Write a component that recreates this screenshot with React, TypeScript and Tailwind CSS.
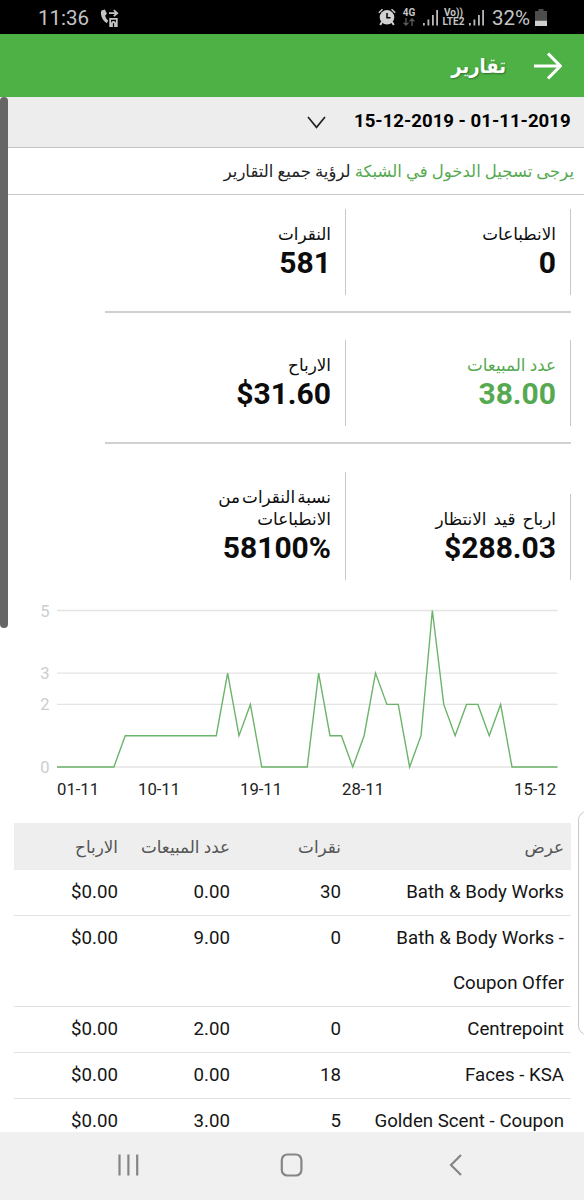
import type { ReactNode } from 'react';

const stats = [
  {
    className: 'mb-[27px] border-b-2 border-[#d0d0d0] pb-[16px]',
    items: [
      { label: 'الانطباعات', value: '0' },
      { label: 'النقرات', value: '581' },
    ],
  },
  {
    className: 'mb-[28px] border-b-2 border-[#d0d0d0] pb-[16px]',
    items: [
      { label: 'عدد المبيعات', value: '38.00', green: true },
      { label: 'الارباح', value: '$31.60' },
    ],
  },
  {
    className: '',
    items: [
      { label: 'ارباح قيد الانتظار', value: '$288.03', spacing: '[word-spacing:3px]' },
      { label: 'نسبة النقرات من الانطباعات', value: '58100%', spacing: '[word-spacing:-2px]' },
    ],
  },
];

const sales = [
  0, 0, 0, 0, 0, 0, 1, 1, 1, 1, 1, 1, 1, 1, 1, 3, 1, 2, 0, 0, 0, 0, 0,
  3, 1, 1, 0, 1, 3, 2, 2, 0, 1, 5, 2, 1, 2, 2, 1, 2, 0, 0, 0, 0, 0,
];

const ticks = [5, 3, 2, 0];

const dates = [
  { x: 57, label: '01-11' },
  { x: 138, label: '10-11' },
  { x: 240, label: '19-11' },
  { x: 342, label: '28-11' },
  { x: 514, label: '15-12' },
];

const offers = [
  { name: 'Bath & Body Works', clicks: '30', sales: '0.00', earnings: '$0.00' },
  { name: 'Bath & Body Works - Coupon Offer', clicks: '0', sales: '9.00', earnings: '$0.00' },
  { name: 'Centrepoint', clicks: '0', sales: '2.00', earnings: '$0.00' },
  { name: 'Faces - KSA', clicks: '18', sales: '0.00', earnings: '$0.00' },
  { name: 'Golden Scent - Coupon', clicks: '5', sales: '3.00', earnings: '$0.00' },
];

const Signal = () => (
  <svg width="16" height="18" viewBox="0 0 16 18" fill="#b8b8b8">
    <rect x="0" y="15" width="1.8" height="2.5" />
    <rect x="4.5" y="11.5" width="1.8" height="6" />
    <rect x="9" y="7" width="1.8" height="10.5" />
    <rect x="13.2" y="2" width="1.8" height="15.5" />
  </svg>
);

const StatusBar = () => (
  <div dir="ltr" className="flex h-[34px] items-center bg-black pl-[38px] pr-[37px] text-[#c4c4c4]">
    <span className="w-[63px] pt-[3px] text-[20.5px] leading-none">11:36</span>
    <svg className="mt-[2px]" width="18" height="19" viewBox="0 0 18 19" fill="none" stroke="#c4c4c4">
      <path d="M0.4 1.4 L3.9 0.4 L5.9 4.8 L4.2 6.4 C4.6 8.5 5.4 10 7.2 11.4 L5.8 14.2 C1.2 11.5 -1.2 5.5 0.4 1.4 Z" fill="#c4c4c4" stroke="none" />
      <path d="M8 4.2 H15.5 M12.8 1.2 L16.2 4.2 L12.8 7.2" strokeWidth="1.8" />
      <path d="M9.2 17.2 V9.8 H15.8 V17.2 H14 V14 Q12.5 12 11 14 V17.2 Z" strokeWidth="1.8" />
    </svg>
    <div className="ml-auto flex items-center">
      <svg width="18" height="18" viewBox="0 0 18 18" fill="#d0d0d0">
        <path d="M0.3 4.2 L4 0.8 L5 1.8 L1.3 5.2 Z M17.7 4.2 L14 0.8 L13 1.8 L16.7 5.2 Z" />
        <circle cx="9" cy="9.3" r="7.3" />
        <path d="M4 14 L2.2 17 M14 14 L15.8 17" stroke="#d0d0d0" strokeWidth="2" />
        <path d="M9 5 V9.8 H12.5" fill="none" stroke="#000" strokeWidth="1.5" />
      </svg>
      <div className="ml-[6px] flex w-[14px] flex-col items-center">
        <span className="text-[10px] font-bold leading-[10px]">4G</span>
        <svg width="12" height="8" viewBox="0 0 12 8" fill="none" stroke="#5c5c5c" strokeWidth="1.3">
          <path d="M3 0 V7 M0.5 4.6 L3 7 L5.5 4.6 M9 8 V1 M6.5 3.4 L9 1 L11.5 3.4" />
        </svg>
      </div>
      <div className="ml-[7px]"><Signal /></div>
      <div className="ml-[3px] flex w-[23px] flex-col items-center text-[10px] font-bold leading-[9px]">
        <span>Vo))</span>
        <span>LTE2</span>
      </div>
      <div className="ml-[4px]"><Signal /></div>
      <span className="ml-[7px] w-[40px] whitespace-nowrap pt-[3px] text-[20.5px] leading-none">32%</span>
      <svg className="ml-[3px] mt-[1px]" width="12" height="17" viewBox="0 0 12 17">
        <path d="M3.5 0 H8.5 V2 H12 V11 H0 V2 H3.5 Z" fill="#4c4c4c" />
        <rect y="11.5" width="12" height="5.5" fill="#cfcfcf" />
      </svg>
    </div>
  </div>
);

const Header = () => (
  <div className="flex h-[63px] items-center bg-[#4db146] pr-[22px] text-white">
    <svg width="28" height="28" viewBox="0 0 28 28" fill="none" stroke="white" strokeWidth="3.2">
      <path d="M0 14 H26 M14 1.5 L26.3 14 L14 26.5" />
    </svg>
    <h1 className="mr-[28px] font-['DejaVu_Sans_Condensed','DejaVu_Sans',sans-serif] text-[20px] font-bold leading-none [font-stretch:condensed] [text-shadow:1px_1px_2px_rgba(0,0,0,0.35)]">تقارير</h1>
  </div>
);

type StatProps = { label: string; value: string; green?: boolean; spacing?: string };

const Stat = ({ label, value, green, spacing = '' }: StatProps) => (
  <div className={`border-r border-[#c8c8c8] py-[14px] pr-[14px] ${green ? 'text-[#56a951]' : 'text-[#0c0c0c]'}`}>
    <div className={`w-[136px] text-[16.8px] leading-[22px] ${spacing}`}>{label}</div>
    <div dir="ltr" className="text-right text-[30px] font-bold leading-[36px]">{value}</div>
  </div>
);

const Chart = () => {
  const points = sales.map((v, i) => `${57 + i * 11.375},${177 - v * 31.3}`).join(' ');

  return (
    <svg className="block" width="584" height="215" viewBox="0 0 584 215">
      {ticks.map((t) => (
        <g key={t}>
          <line x1="57" x2="557.5" y1={177 - t * 31.3} y2={177 - t * 31.3} stroke="#e4e4e4" strokeWidth="1.3" />
          <text x="49.5" y={183 - t * 31.3} textAnchor="end" direction="ltr" fontSize="16.5" fill="#cdcdcd">{t}</text>
        </g>
      ))}
      <polyline points={points} fill="none" stroke="#6cb46a" strokeWidth="1.4" />
      {dates.map((d) => (
        <text key={d.label} x={d.x} y="205" direction="ltr" fontSize="16.7" fill="#222">{d.label}</text>
      ))}
    </svg>
  );
};

const Row = ({ children, head }: { children: ReactNode; head?: boolean }) => (
  <div
    className={`grid grid-cols-[223px_111px_112px_111px] ${
      head ? 'h-[47px] bg-[#eeeeee] text-[16.8px] leading-[48px] text-[#555]' : 'border-b border-[#e2e2e2] text-[18.7px] leading-[45px] text-[#151515]'
    }`}
  >
    {children}
  </div>
);

const Cell = ({ children }: { children: ReactNode }) => (
  <div dir="ltr" className="px-[7px] text-right">{children}</div>
);

const App = () => {
  return (
    <div dir="rtl" className="relative flex h-[1200px] w-[584px] flex-col overflow-hidden bg-white font-['Roboto','DejaVu_Sans',sans-serif]">
      <StatusBar />
      <Header />
      <div className="flex h-[51px] shrink-0 items-center border-b border-[#c6c6c6] bg-[#ededed] pr-[13px]">
        <span dir="ltr" className="w-[217px] whitespace-nowrap pb-[2px] text-[18.6px] font-bold leading-none text-black">15-12-2019 - 01-11-2019</span>
        <svg className="mr-[28px]" width="19" height="13" viewBox="0 0 19 13" fill="none" stroke="#222" strokeWidth="1.7">
          <path d="M1 1 L9.5 11.3 L18 1" />
        </svg>
      </div>
      <p className="h-[47px] shrink-0 border-b border-[#c8c8c8] pr-[10px] text-[16.5px] leading-[47px] text-[#222]">
        <span className="text-[#56a951]">يرجى تسجيل الدخول في الشبكة</span> لرؤية جميع التقارير
      </p>

      <main className="min-h-0 flex-1 overflow-hidden">
        <section className="mr-[13px] flex h-[395px] w-[466px] flex-col pt-[14px]">
          {stats.map((row, i) => (
            <div key={i} className={`grid grid-cols-[225px_241px] items-end ${row.className}`}>
              {row.items.map((s) => <Stat key={s.label} {...s} />)}
            </div>
          ))}
        </section>
        <Chart />
        <section className="mr-[13px] mt-[18px] w-[557px]">
          <Row head>
            <div className="pr-[7px]">عرض</div>
            <div className="pr-[7px]">نقرات</div>
            <div className="whitespace-nowrap pr-[7px]">عدد المبيعات</div>
            <div className="pr-[7px]">الارباح</div>
          </Row>
          {offers.map((o) => (
            <Row key={o.name}>
              <Cell>{o.name}</Cell>
              <Cell>{o.clicks}</Cell>
              <Cell>{o.sales}</Cell>
              <Cell>{o.earnings}</Cell>
            </Row>
          ))}
        </section>
      </main>

      <nav dir="ltr" className="flex h-[68px] shrink-0 items-center bg-[#f0f0f0] pb-[3px] pl-[118px]">
        <svg width="22" height="22" viewBox="0 0 22 22" stroke="#858585" strokeWidth="2.2">
          <path d="M1.5 0.5 V21.5 M10.4 0.5 V21.5 M19.2 0.5 V21.5" />
        </svg>
        <svg className="ml-[140px]" width="24" height="24" viewBox="0 0 24 24" fill="none" stroke="#858585" strokeWidth="2.2">
          <rect x="1.8" y="1.5" width="19.6" height="21" rx="5.5" />
        </svg>
        <svg className="ml-[145px]" width="14" height="22" viewBox="0 0 14 22" fill="none" stroke="#858585" strokeWidth="2.2">
          <path d="M12 1 L2 11 L12 21" />
        </svg>
      </nav>

      {/* scroll thumb and edge panel handle float over the page */}
      <div className="absolute left-0 top-[97px] h-[531px] w-2 rounded-full bg-[#666]" />
      <div className="absolute -right-4 top-[811px] h-[224px] w-[22px] rounded-[9px] border border-[#c9c9c9] bg-white" />
    </div>
  );
};

export default App;
